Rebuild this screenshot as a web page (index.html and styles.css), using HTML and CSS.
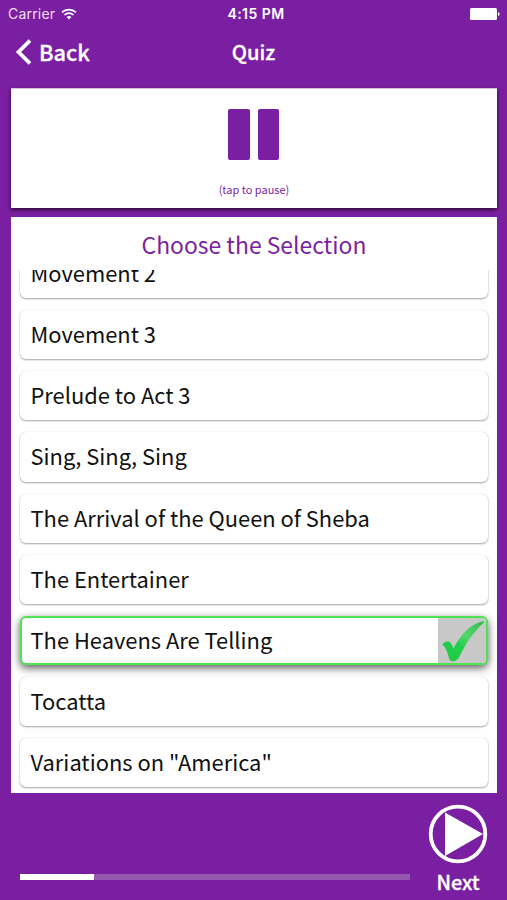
FILE: index.html
```html
<!DOCTYPE html>
<html lang="en">
<head>
<meta charset="utf-8">
<title>Quiz</title>
<link rel="stylesheet" href="styles.css">
</head>
<body>
<div class="app">
  <div class="status">
    <div class="carrier"><span>Carrier</span>
      <svg class="wifi" width="16" height="12" viewBox="0 0 16 12" fill="none" stroke="#fff" stroke-width="1.7"><path d="M1 4.4a10 10 0 0 1 14 0M3.5 7a6.4 6.4 0 0 1 9 0"/><path d="M5.6 9.1a3.4 3.4 0 0 1 4.800 0L8 11.500z" fill="#fff" stroke="none"/></svg>
    </div>
    <span class="time">4:15 PM</span>
    <svg class="battery" width="30" height="12" viewBox="0 0 30 12" fill="#fff"><rect width="27" height="12" rx="1.500"/><path d="M28 4q1.600.500 1.600 2T28 8z"/></svg>
  </div>
  <header class="nav">
    <a class="back"><svg width="17" height="26" viewBox="0 0 17 26" fill="none" stroke="#fff" stroke-width="3.800"><path d="M16 1.500 4.500 13l11.500 11.500"/></svg><span>Back</span></a>
    <h1 class="title">Quiz</h1>
    <span></span>
  </header>
  <section class="player">
    <div class="pause"><i></i><i></i></div>
    <p class="hint">(tap to pause)</p>
  </section>
  <section class="choices">
    <h2 class="heading">Choose the Selection</h2>
    <ul class="list">
      <li class="item">Movement 2</li>
      <li class="item">Movement 3</li>
      <li class="item">Prelude to Act 3</li>
      <li class="item">Sing, Sing, Sing</li>
      <li class="item">The Arrival of the Queen of Sheba</li>
      <li class="item">The Entertainer</li>
      <li class="item correct"><span>The Heavens Are Telling</span>
        <span class="mark"><svg width="46" height="46" viewBox="0 0 46 46"><defs><linearGradient id="g" x1="0" y1="1" x2="1" y2="0"><stop offset="0" stop-color="#20c840"/><stop offset=".4" stop-color="#20cf4d"/><stop offset=".6" stop-color="#54d56c"/><stop offset="1" stop-color="#32bd4d"/></linearGradient></defs><path fill="url(#g)" d="M3 26.500Q7 22.500 10 23.500Q13 25.500 14.500 30.500C21 17.500 31 6 44.500 3Q45 3.500 44.500 5C34 14 26 27 19.500 40.500Q15 45 10.500 42C9 36 7.500 29.500 3 26.500Z"/></svg></span></li>
      <li class="item">Tocatta</li>
      <li class="item">Variations on "America"</li>
    </ul>
  </section>
  <footer class="footer">
    <div class="progress"><div class="bar"></div></div>
    <div class="next">
      <svg width="60" height="60" viewBox="0 0 60 60"><circle cx="30" cy="30" r="27.300" fill="none" stroke="#fff" stroke-width="3.800"/><path fill="#fff" d="M17 8.500V52L55 30z"/></svg>
      <span>Next</span>
    </div>
  </footer>
</div>
</body>
</html>
```
FILE: styles.css
```css
* { box-sizing: border-box; margin: 0; padding: 0; }
body { background: #7b1fa2; color: #fff; font-family: "Noto Sans CJK SC", "Noto Sans", sans-serif; }
.app { width: 507px; height: 900px; display: flex; flex-direction: column; overflow: hidden; background: #7b1fa2; }
.status { flex: none; height: 27px; padding: 0 7px 0 8px; display: grid; grid-template-columns: 1fr auto 1fr; align-items: center; font: 14px/27px Inter, sans-serif; }
.carrier { display: flex; align-items: center; gap: 6px; color: #f0dff5; letter-spacing: .2px; }
.time { font-weight: 600; font-size: 14px; line-height: 27px; letter-spacing: .45px; margin-left: 4px; }
.battery { justify-self: end; }
.nav { flex: none; height: 52px; padding: 0 14px; display: grid; grid-template-columns: 1fr auto 1fr; align-items: center; }
.back { display: flex; align-items: center; gap: 8px; font-size: 21.800px; font-weight: 500; line-height: 40px; margin-top: -3px; -webkit-text-stroke: .3px #fff; }
.title { font-size: 20.200px; font-weight: 500; line-height: 40px; margin-top: -3px; -webkit-text-stroke: .3px #fff; }
.player { flex: none; height: 120px; margin: 9px 10px 0 11px; padding-top: 20px; display: flex; flex-direction: column; align-items: center; background: #fff; color: #7b1fa2; border-top: 1px solid #d9bfe4; box-shadow: 0 2px 4px rgba(0,0,0,.65); }
.pause { display: flex; gap: 8px; margin-left: -1px; }
.pause i { width: 21.500px; height: 51px; border-radius: 2px; background: #7b1fa2; }
.hint { font-size: 11px; line-height: 16px; margin-top: 21px; }
.choices { height: 576px; flex: none; margin: 9px 10px 0 11px; background: #fff; display: flex; flex-direction: column; }
.heading { height: 53px; flex: none; text-align: center; font-size: 22.900px; line-height: 54px; font-weight: 400; color: #7b1fa2; }
.list { flex: 1; min-height: 0; overflow: hidden; list-style: none; padding: 0 9px 6px; display: flex; flex-direction: column; justify-content: flex-end; gap: 12px; }
.item { flex: none; height: 49.100px; border-radius: 6px; padding-left: 10.500px; color: #111; font-size: 21.900px; line-height: 48px; background: #fff; box-shadow: 0 1px 2px rgba(0,0,0,.35), 0 0 1px rgba(0,0,0,.2); }
.correct { display: flex; justify-content: space-between; border: 2px solid #4fe253; padding-left: 8.500px; line-height: 44px; box-shadow: 0 3px 8px rgba(0,0,0,.65); overflow: hidden; }
.mark { width: 48px; background: #c8c8c8; padding-left: 1px; }
.mark svg { display: block; }
.footer { flex: none; height: 107px; display: flex; padding: 0 18px 0 20px; justify-content: space-between; }
.progress { width: 390px; height: 6px; margin-top: 81px; background: #9657ae; }
.bar { width: 19%; height: 100%; background: #fff; }
.next { width: 62px; padding-top: 11px; display: flex; flex-direction: column; align-items: center; font-size: 19.800px; font-weight: 500; line-height: 36px; -webkit-text-stroke: .3px #fff; }
.next svg { flex: none; }
```
